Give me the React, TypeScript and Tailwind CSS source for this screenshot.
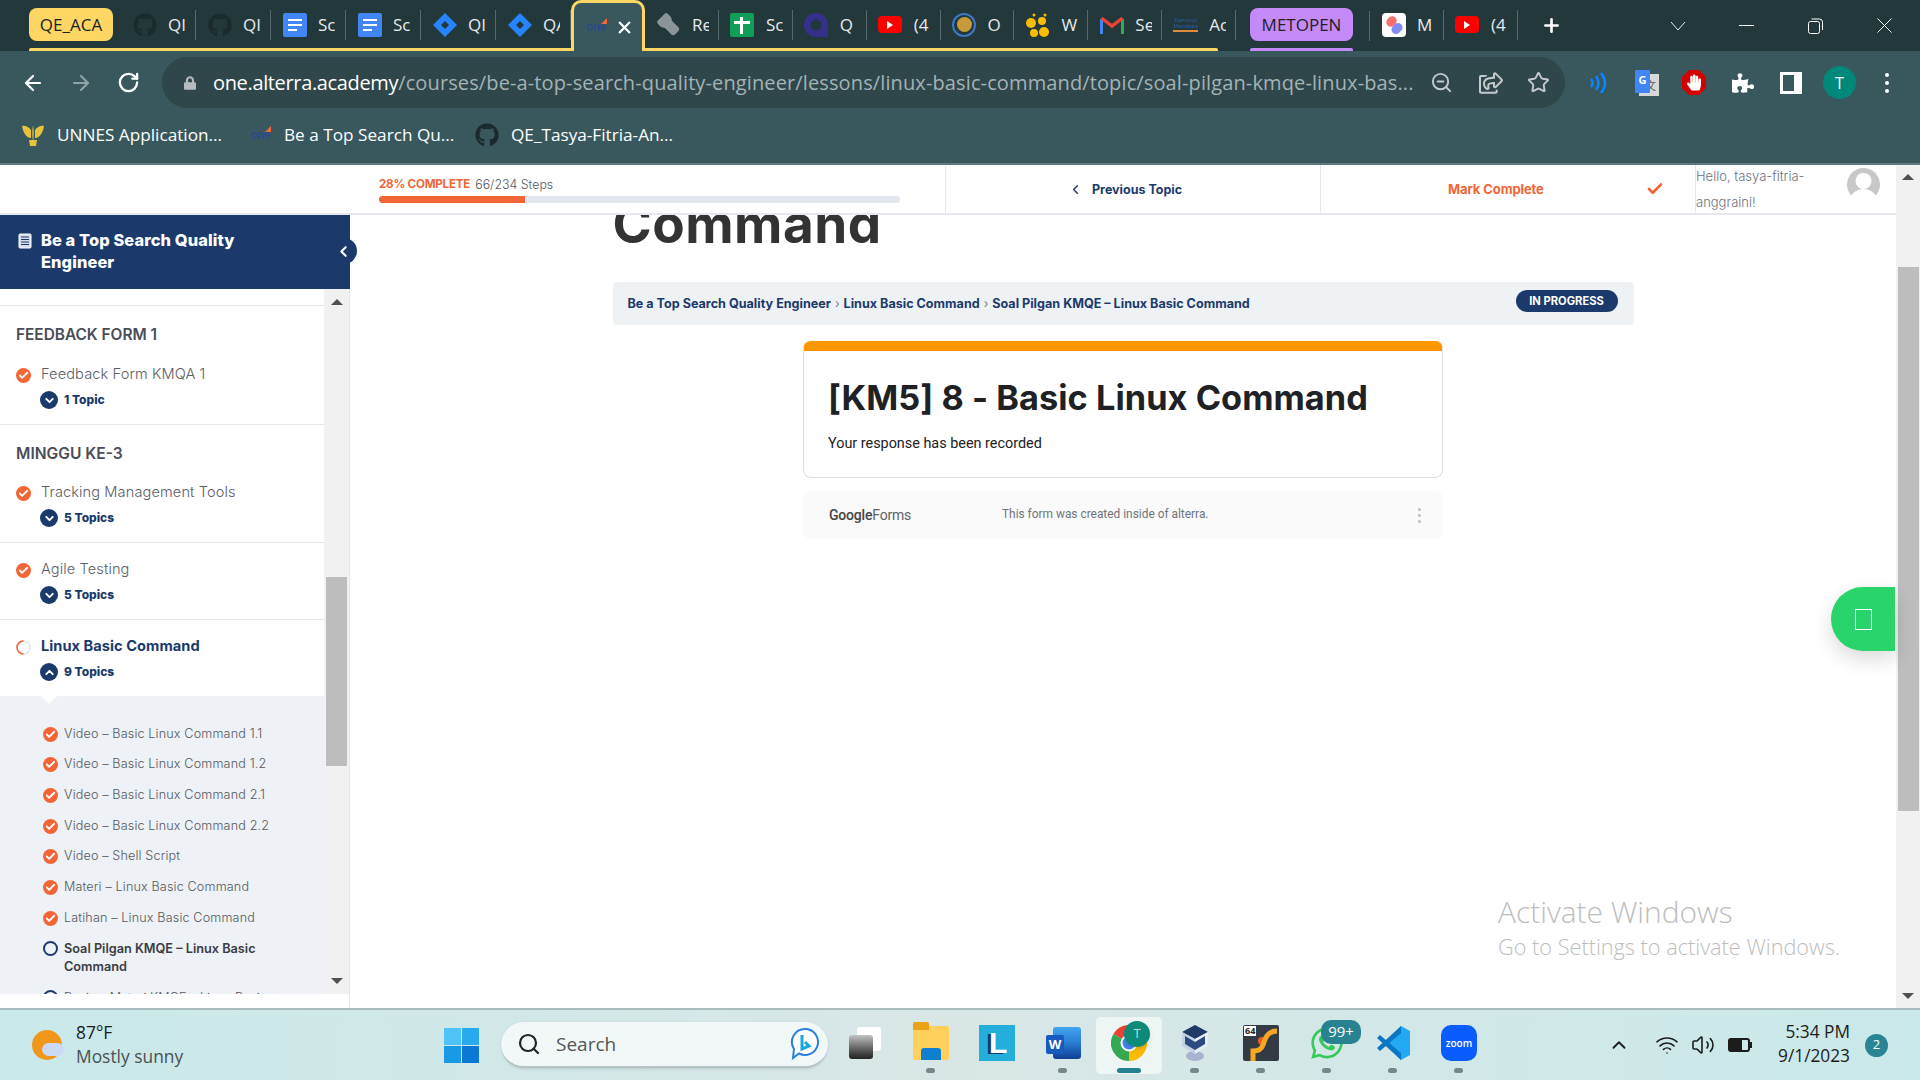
import {
  ArrowLeft,
  ArrowRight,
  Check,
  ChevronDown,
  ChevronLeft,
  ChevronUp,
  Flashlight,
  Plus,
  RotateCw,
  Search,
  Star,
  Volume2,
  Wifi,
  ZoomOut,
} from 'lucide-react';
import { FaGithub, FaHandPaper, FaLock, FaPuzzlePiece, FaRegShareSquare, FaWhatsapp } from 'react-icons/fa';

const ui = "font-['Open_Sans',sans-serif]";
const navy = 'text-[#1b3a6b]';

const GitHubIcon = () => <FaGithub className="h-[24px] w-[24px] text-[#1b2a2d]" />;

const DocsIcon = () => (
  <div className="flex h-[24px] w-[24px] flex-col justify-center gap-[3px] rounded-[2px] bg-[#4285f4] px-[5px]">
    <div className="h-[2px] bg-white" />
    <div className="h-[2px] bg-white" />
    <div className="h-[2px] w-[9px] bg-white" />
  </div>
);

const JiraIcon = () => (
  <svg width="24" height="24" viewBox="0 0 24 24">
    <path d="M12 0 24 12 12 24 0 12Z" fill="#2684ff" />
    <path d="M12 8 16 12 12 16 8 12Z" fill="#22383b" />
  </svg>
);

const SheetsIcon = () => (
  <div className="relative h-[24px] w-[24px] rounded-[2px] bg-[#0f9d58]">
    <div className="absolute left-[10px] top-[4px] h-[17px] w-[3px] bg-white" />
    <div className="absolute left-[4px] top-[8px] h-[3px] w-[16px] bg-white" />
  </div>
);

const YoutubeIcon = () => (
  <div className="flex h-[17px] w-[24px] items-center justify-center rounded-[4px] bg-[#ff0000]">
    <div className="h-0 w-0 border-y-[4px] border-l-[6px] border-y-transparent border-l-white" />
  </div>
);

const QuipIcon = () => (
  <svg width="24" height="24" viewBox="0 0 24 24">
    <path d="M12 0a12 12 0 1 0 0 24h12V12A12 12 0 0 0 12 0Z" fill="#35308c" />
    <circle cx="12" cy="12" r="5.5" fill="#22383b" />
  </svg>
);

const RingIcon = () => (
  <div className="flex h-[24px] w-[24px] items-center justify-center rounded-full border-2 border-[#3f78c4]">
    <div className="h-[15px] w-[15px] rounded-full bg-[#c99a3b]" />
  </div>
);

const DotsIcon = () => (
  <svg width="25" height="24" viewBox="0 0 25 24" fill="#fbbc04">
    <circle cx="6" cy="10" r="5" />
    <circle cx="17" cy="8" r="4" />
    <circle cx="9" cy="20" r="4" />
    <circle cx="19" cy="19" r="5" />
    <circle cx="20" cy="2" r="1.5" />
    <circle cx="9" cy="2" r="1.5" />
  </svg>
);

const GmailIcon = () => (
  <svg width="24" height="20" viewBox="0 0 24 20" fill="none">
    <path d="M1.5 19V4" stroke="#4285f4" strokeWidth="3" />
    <path d="M22.5 19V4" stroke="#34a853" strokeWidth="3" />
    <path d="M1.5 3 12 11 22.5 3" stroke="#ea4335" strokeWidth="3.4" />
  </svg>
);

const KampusIcon = () => (
  <div className="flex w-[25px] flex-col items-center text-[6px] leading-[6px] text-[#2a5db0]">
    <span>Kampus</span>
    <span>Merdeka</span>
    <div className="mt-[1px] h-[2px] w-full bg-[#e08a3c]" />
  </div>
);

const MIcon = () => (
  <div className="relative h-[24px] w-[24px] overflow-hidden rounded-[4px] bg-white">
    <div className="absolute left-[4px] top-[4px] h-[9px] w-[11px] -rotate-45 rounded-full bg-[#f87171]" />
    <div className="absolute left-[9px] top-[11px] h-[9px] w-[12px] -rotate-45 rounded-full bg-[#818cf8]" />
  </div>
);

const OneLogo = () => (
  <div className="relative h-[16px] w-[22px] text-center font-['Liberation_Sans',sans-serif] text-[12px] font-bold leading-[16px] tracking-[-0.5px] text-[#2b4a86]">
    one
    <div className="absolute right-0 top-[-1px] h-0 w-0 border-b-[6px] border-l-[6px] border-b-[#ef6a32] border-l-transparent" />
  </div>
);

const firstTabs = [
  { icon: <GitHubIcon />, label: 'QI' },
  { icon: <GitHubIcon />, label: 'QI' },
  { icon: <DocsIcon />, label: 'Sc' },
  { icon: <DocsIcon />, label: 'Sc' },
  { icon: <JiraIcon />, label: 'QI' },
  { icon: <JiraIcon />, label: 'QA' },
];

const secondTabs = [
  { icon: <Flashlight className="h-[24px] w-[24px] -rotate-45 fill-[#8b9599] text-[#8b9599]" />, label: 'Re' },
  { icon: <SheetsIcon />, label: 'Sc' },
  { icon: <QuipIcon />, label: 'Q' },
  { icon: <YoutubeIcon />, label: '(4' },
  { icon: <RingIcon />, label: 'O' },
  { icon: <DotsIcon />, label: 'W' },
  { icon: <GmailIcon />, label: 'Se' },
  { icon: <KampusIcon />, label: 'Ac' },
];

const thirdTabs = [
  { icon: <MIcon />, label: 'M' },
  { icon: <YoutubeIcon />, label: '(4' },
];

function Tab({ icon, label, wide }: { icon: React.ReactNode; label: string; wide?: boolean }) {
  return (
    <div className={`flex h-full shrink-0 items-center pb-[2px] ${wide ? 'w-[75px]' : 'w-[73.9px]'}`}>
      <div className="flex w-[47px] justify-center">{icon}</div>
      <div className="w-[17px] overflow-hidden whitespace-nowrap text-[17px] text-[#e8eaed]">{label}</div>
      <div className="ml-auto h-[30px] w-[1px] bg-[#56696c]" />
    </div>
  );
}

function TabStrip() {
  return (
    <div className={`flex h-[51px] shrink-0 items-center bg-[#22383b] pl-[29px] ${ui}`}>
      <div className="relative flex h-full w-[1207px] shrink-0 items-center">
        <div className="mb-[2px] flex h-[33px] w-[84px] shrink-0 items-center justify-center rounded-[8px] bg-[#fdd663] text-[17px] text-[#202124]">
          QE_ACA
        </div>
        <div className="w-[8px] shrink-0" />
        {firstTabs.map((t, i) => (
          <Tab key={i} icon={t.icon} label={t.label} wide />
        ))}
        <div className="relative z-10 flex h-full w-[74px] shrink-0 items-center rounded-t-[10px] border-x-[3px] border-t-[3px] border-[#fdd663] bg-[#38585d] pl-[11px]">
          <OneLogo />
          <svg className="ml-[11px]" width="13" height="13" viewBox="0 0 12 12" stroke="#fff" strokeWidth="2">
            <path d="M1 1 11 11M11 1 1 11" />
          </svg>
        </div>
        {secondTabs.map((t, i) => (
          <Tab key={i} icon={t.icon} label={t.label} />
        ))}
        <div className="absolute bottom-0 left-0 h-[3px] w-[1189px] rounded-t-[2px] bg-[#fdd663]" />
      </div>
      <div className="relative ml-[14px] flex h-full w-[103px] shrink-0 items-center">
        <div className="mb-[2px] flex h-[33px] w-[103px] items-center justify-center rounded-[8px] bg-[#c58af9] text-[17px] text-[#202124]">
          METOPEN
        </div>
        <div className="absolute bottom-0 left-0 h-[3px] w-full rounded-t-[2px] bg-[#c58af9]" />
      </div>
      <div className="ml-[16px] h-[30px] w-[1px] bg-[#56696c]" />
      {thirdTabs.map((t, i) => (
        <Tab key={i} icon={t.icon} label={t.label} />
      ))}
      <Plus className="ml-[23px] h-[21px] w-[21px] text-white" strokeWidth={3} />
      <svg className="ml-[108px]" width="16" height="10" viewBox="0 0 16 10" fill="none" stroke="#e8eaed">
        <path d="M1 1 8 9 15 1" />
      </svg>
      <div className="ml-[53px] h-[1px] w-[15px] bg-white" />
      <svg className="ml-[54px]" width="15" height="16" viewBox="0 0 15 16" fill="none" stroke="#fff">
        <rect x="0.5" y="3.5" width="11" height="12" rx="2" />
        <path d="M3.5 1h8a3 3 0 0 1 3 3v8" />
      </svg>
      <svg className="ml-[54px]" width="15" height="15" viewBox="0 0 15 15" stroke="#fff">
        <path d="M.5.5 14.5 14.5M14.5.5.5 14.5" />
      </svg>
    </div>
  );
}

function Toolbar() {
  return (
    <div className={`flex h-[57px] shrink-0 items-start bg-[#38585d] pt-[6px] ${ui}`}>
      <div className="flex h-[51px] w-[162px] shrink-0 items-center pl-[21px]">
        <ArrowLeft className="h-[24px] w-[24px] text-white" strokeWidth={2.2} />
        <ArrowRight className="ml-[24px] h-[24px] w-[24px] text-[#8fa3a6]" strokeWidth={2.2} />
        <RotateCw className="ml-[24px] h-[23px] w-[23px] text-white" strokeWidth={2.4} />
      </div>
      <div className="flex h-[51px] w-[1403px] shrink-0 items-center rounded-full bg-[#2f464a] pl-[22px]">
        <FaLock className="h-[14px] w-[12px] text-[#b5bcbf]" />
        <div className="ml-[17px] w-[1205px] overflow-hidden whitespace-nowrap text-[20px] tracking-[0.12px] text-[#a3b3b6]">
          <span className="tracking-[-0.35px] text-white">one.alterra.academy</span>
          /courses/be-a-top-search-quality-engineer/lessons/linux-basic-command/topic/soal-pilgan-kmqe-linux-bas...
        </div>
        <ZoomOut className="ml-[12px] h-[23px] w-[23px] text-[#c3cacc]" />
        <FaRegShareSquare className="ml-[26px] h-[22px] w-[24px] text-[#c3cacc]" />
        <Star className="ml-[24px] h-[23px] w-[23px] text-[#c3cacc]" strokeWidth={2} />
      </div>
      <div className="flex h-[51px] flex-1 items-center pl-[24px]">
        <svg width="20" height="24" viewBox="0 0 20 24" fill="none" stroke="#0a84ff" strokeWidth="2.6">
          <path d="M2 8q3 4 0 8M7 5q5 7 0 14M12 2q8 10 0 20" />
        </svg>
        <div className="relative ml-[26px] h-[26px] w-[24px]">
          <div className="absolute left-[4px] top-[4px] h-[22px] w-[20px] bg-[#d8d8d8] pl-[6px] pt-[5px] font-['Noto_Sans_CJK_SC',sans-serif] text-[11px] leading-[12px] text-[#555]">文</div>
          <div className="absolute left-0 top-0 h-[23px] w-[15px] rounded-[1px] bg-[#4285f4] text-center text-[11px] font-bold leading-[20px] text-white">G</div>
        </div>
        <svg className="ml-[23px]" width="24" height="25" viewBox="0 0 24 25">
          <path d="M7 0h10l7 7v11l-7 7H7l-7-7V7Z" fill="#d40000" />
          <foreignObject x="5" y="3" width="14" height="19">
            <FaHandPaper className="h-[19px] w-[14px] text-white" />
          </foreignObject>
        </svg>
        <FaPuzzlePiece className="ml-[26px] h-[22px] w-[22px] text-white" />
        <div className="ml-[26px] flex h-[22px] w-[22px] border-[3px] border-white bg-white">
          <div className="h-full w-[11px] bg-[#38585d]" />
        </div>
        <div className="ml-[21px] flex h-[33px] w-[33px] items-center justify-center rounded-full bg-[#00897b] text-[16px] text-white">T</div>
        <div className="ml-[29px] flex flex-col gap-[4px]">
          <div className="h-[4px] w-[4px] rounded-full bg-white" />
          <div className="h-[4px] w-[4px] rounded-full bg-white" />
          <div className="h-[4px] w-[4px] rounded-full bg-white" />
        </div>
      </div>
    </div>
  );
}

function BookmarkBar() {
  return (
    <div className={`flex h-[55px] shrink-0 items-center bg-[#38585d] pb-[2px] text-[17.2px] text-white ${ui}`}>
      <svg className="ml-[21px]" width="24" height="24" viewBox="0 0 24 24" fill="#e5c33d">
        <path d="M12 2c-1 6-1 11 0 16 1-5 1-10 0-16ZM10 7C8 4 4 2 1 3c1 6 4 12 9 12ZM14 7c2-3 6-5 9-4-1 6-4 12-9 12Z" />
        <path d="M8 17h8l-1 6H9Z" />
      </svg>
      <span className="ml-[12px] w-[166px] whitespace-nowrap">UNNES Application...</span>
      <div className="ml-[26px]"><OneLogo /></div>
      <span className="ml-[13px] w-[166px] whitespace-nowrap">Be a Top Search Qu...</span>
      <FaGithub className="ml-[25px] h-[24px] w-[24px] text-[#1b2a2d]" />
      <span className="ml-[12px] whitespace-nowrap">QE_Tasya-Fitria-An...</span>
    </div>
  );
}

function Done({ size = 'h-[15px] w-[15px]' }: { size?: string }) {
  return (
    <div className={`flex shrink-0 items-center justify-center rounded-full bg-[#f26536] ${size}`}>
      <Check className="h-[11px] w-[11px] text-white" strokeWidth={4} />
    </div>
  );
}

function Lesson({ title, topics, open, active }: { title: string; topics: string; open?: boolean; active?: boolean }) {
  return (
    <div className="h-[76px] pl-[16px] pt-[17px]">
      <div className="flex h-[20px] items-center">
        {active ? (
          <svg className="shrink-0" width="15" height="15" viewBox="0 0 15 15" fill="none" strokeWidth="1.6">
            <circle cx="7.5" cy="7.5" r="6.5" stroke="#e2e8f0" />
            <path d="M7.5 1A6.5 6.5 0 0 0 7.5 14" stroke="#f26536" />
          </svg>
        ) : (
          <Done />
        )}
        <span className={`ml-[10px] text-[14.6px] ${active ? `font-bold tracking-[0.05px] ${navy}` : 'font-light tracking-[0.1px] text-[#5c6066]'}`}>{title}</span>
      </div>
      <div className="ml-[24px] mt-[5px] flex h-[20px] items-center">
        <div className="flex h-[18px] w-[18px] items-center justify-center rounded-full bg-[#1b3a6b]">
          {open ? (
            <ChevronUp className="h-[13px] w-[13px] text-white" strokeWidth={3.5} />
          ) : (
            <ChevronDown className="h-[13px] w-[13px] text-white" strokeWidth={3.5} />
          )}
        </div>
        <span className={`ml-[6px] text-[12px] font-extrabold ${navy}`}>{topics}</span>
      </div>
    </div>
  );
}

const topics = [
  'Video – Basic Linux Command 1.1',
  'Video – Basic Linux Command 1.2',
  'Video – Basic Linux Command 2.1',
  'Video – Basic Linux Command 2.2',
  'Video – Shell Script',
  'Materi – Linux Basic Command',
  'Latihan – Linux Basic Command',
];

function ScrollArrow({ up, className = '' }: { up?: boolean; className?: string }) {
  return (
    <div className={`flex shrink-0 items-center justify-center ${className}`}>
      <div className={`h-0 w-0 border-x-[6px] border-x-transparent ${up ? 'border-b-[6px] border-b-[#505050]' : 'border-t-[6px] border-t-[#505050]'}`} />
    </div>
  );
}

function Sidebar() {
  return (
    <aside className="flex w-[350px] shrink-0 flex-col border-r border-[#e5e7eb] font-['Inter',sans-serif]">
      <div className="relative flex h-[74px] w-[350px] shrink-0 items-start bg-[#1b3a6b] pl-[18px] pt-[14px]">
        <svg className="mt-[4px] shrink-0" width="14" height="16" viewBox="0 0 14 16" fill="none">
          <rect x="1" y="1" width="12" height="14" rx="1" fill="#d7deea" stroke="#fff" />
          <path d="M3 4h8M3 6.5h8M3 9h8M3 11.5h8" stroke="#1b3a6b" />
        </svg>
        <div className="ml-[9px] w-[240px] text-[16.4px] font-extrabold leading-[22px] tracking-[0.1px] text-white">
          Be a Top Search Quality Engineer
        </div>
        <div className="absolute left-[330px] top-[23px] flex h-[26px] w-[27px] items-center justify-center rounded-r-full bg-[#1b3a6b]">
          <ChevronLeft className="h-[17px] w-[17px] text-white" strokeWidth={3} />
        </div>
      </div>
      <div className="flex h-[705px] shrink-0">
        <div className="w-[324px] shrink-0 overflow-hidden">
          <div className="h-[17px] border-b border-[#e5e7eb]" />
          <div className="border-b border-[#e5e7eb]">
            <div className="h-[42px] pl-[16px] pt-[19px] text-[15.4px] font-semibold leading-[20px] text-[#4a4d55]">FEEDBACK FORM 1</div>
            <Lesson title="Feedback Form KMQA 1" topics="1 Topic" />
          </div>
          <div className="border-b border-[#e5e7eb]">
            <div className="h-[41px] pl-[16px] pt-[19px] text-[15.6px] font-semibold leading-[20px] text-[#4a4d55]">MINGGU KE-3</div>
            <Lesson title="Tracking Management Tools" topics="5 Topics" />
          </div>
          <div className="border-b border-[#e5e7eb]">
            <Lesson title="Agile Testing" topics="5 Topics" />
          </div>
          <Lesson title="Linux Basic Command" topics="9 Topics" open active />
          <div className="relative bg-[#eef1f5] pl-[43px] pt-[23px]">
            <div className="absolute left-[41px] top-0 h-0 w-0 border-x-[8px] border-t-[8px] border-x-transparent border-t-white" />
            {topics.map((t) => (
              <div key={t} className="mb-[0.7px] flex h-[30px] items-center">
                <Done />
                <span className="ml-[6px] text-[12.6px] font-light tracking-[0.15px] text-[#55585e]">{t}</span>
              </div>
            ))}
            <div className="mb-[0.7px] flex items-start py-[6px]">
              <div className="mt-[1px] h-[15px] w-[15px] shrink-0 rounded-full border-2 border-[#1b3a6b]" />
              <span className="ml-[6px] w-[210px] text-[12.7px] font-semibold leading-[18px] text-[#3a3d44]">Soal Pilgan KMQE – Linux Basic Command</span>
            </div>
            <div className="flex items-start py-[6px]">
              <div className="mt-[1px] h-[15px] w-[15px] shrink-0 rounded-full border-2 border-[#1b3a6b]" />
              <span className="ml-[6px] text-[12.6px] font-light text-[#55585e]">Review Materi KMQE – Linux Basic</span>
            </div>
          </div>
        </div>
        <div className="flex w-[25px] shrink-0 flex-col bg-[#f1f1f1]">
          <ScrollArrow up className="h-[26px]" />
          <div className="h-[262px] shrink-0" />
          <div className="ml-[2px] h-[189px] w-[21px] shrink-0 bg-[#bdbdbd]" />
          <div className="flex-1" />
          <ScrollArrow className="h-[26px]" />
        </div>
      </div>
    </aside>
  );
}

function PageHeader() {
  return (
    <div className="flex h-[50px] shrink-0 border-b-2 border-[#e5e9ef] bg-white font-['Inter',sans-serif]">
      <div className="w-[946px] shrink-0 border-r border-[#e5e9ef] pl-[379px] pr-[45px] pt-[12px]">
        <div className="flex h-[16px] items-center whitespace-nowrap text-[11.6px]">
          <span className="font-bold tracking-[-0.2px] text-[#f26536]">28% COMPLETE</span>
          <span className="ml-[5px] text-[12.4px] font-light text-[#55585e]">66/234 Steps</span>
        </div>
        <div className="mt-[3px] h-[7px] w-[521px] overflow-hidden rounded-full bg-[#e2e6ee]">
          <div className="h-full w-[146px] bg-[#f26536]" />
        </div>
      </div>
      <div className="flex w-[375px] shrink-0 items-center border-r border-[#e5e9ef] pl-[122px]">
        <ChevronLeft className={`h-[15px] w-[15px] ${navy}`} strokeWidth={2.4} />
        <span className={`ml-[9px] mt-[2px] text-[12.5px] font-bold ${navy}`}>Previous Topic</span>
      </div>
      <div className="flex w-[375px] shrink-0 items-center border-r border-[#e5e9ef] pl-[127px]">
        <span className="mt-[2px] w-[198px] text-[13px] font-bold tracking-[-0.1px] text-[#f26536]">Mark Complete</span>
        <Check className="h-[18px] w-[18px] text-[#f26536]" strokeWidth={3.5} />
      </div>
      <div className="flex flex-1 items-start">
        <div className="-mt-[2px] w-[130px] text-[13px] font-light leading-[26px] text-[#6b7280]">Hello, tasya-fitria-anggraini!</div>
        <svg className="ml-[21px] mt-[3px] shrink-0" width="33" height="33" viewBox="0 0 33 33">
          <circle cx="16.5" cy="16.5" r="16.5" fill="#c8c8c8" />
          <circle cx="16.5" cy="13" r="8" fill="#fff" />
          <ellipse cx="16.5" cy="34" rx="14" ry="13" fill="#fff" />
        </svg>
      </div>
    </div>
  );
}

function MainContent() {
  return (
    <main className="flex-1 overflow-hidden bg-white font-['Inter',sans-serif]">
      <div className="mx-auto w-[1021px]">
        <div className="h-[67px] overflow-hidden">
          <div className="-mt-[21px] text-[53px] font-bold leading-[60px] tracking-[0.5px] text-[#333333]">Command</div>
        </div>
        <div className="flex h-[43px] items-center justify-between rounded-[4px] bg-[#eff2f5] pl-[15px] pr-[16px]">
          <div className="mt-[1px] flex items-center whitespace-nowrap text-[12.6px] font-bold">
            <span className={navy}>Be a Top Search Quality Engineer</span>
            <span className="mx-[4px] font-light text-[#5c6066]">›</span>
            <span className={navy}>Linux Basic Command</span>
            <span className="mx-[4px] font-light text-[#5c6066]">›</span>
            <span className={navy}>Soal Pilgan KMQE – Linux Basic Command</span>
          </div>
          <div className="-mt-[6px] flex h-[22px] w-[102px] items-center justify-center rounded-full bg-[#1b3a6b] pt-[1px] text-[11.2px] font-bold text-white">
            IN PROGRESS
          </div>
        </div>
        <div className="mx-auto mt-[16px] w-[640px]">
          <div className="h-[137px] overflow-hidden rounded-[8px] border border-t-[10px] border-[#dadce0] border-t-[#ff9800] bg-white pl-[24px] pt-[24px]">
            <div className="text-[34.3px] font-bold leading-[46px] tracking-[0.05px] text-[#202124]">[KM5] 8 - Basic Linux Command</div>
            <div className="mt-[13px] font-['Roboto',sans-serif] text-[14.4px] leading-[20px] text-[#202124]">Your response has been recorded</div>
          </div>
          <div className="mt-[13px] flex h-[48px] items-center rounded-[8px] bg-[#fafafa] pl-[26px] pr-[22px] font-['Roboto',sans-serif]">
            <div className="w-[173px] text-[14px] tracking-[-0.2px] text-[#5f6368]">
              <span className="font-medium text-[#444]">Google</span>Forms
            </div>
            <div className="text-[11.9px] text-[#70757a]">This form was created inside of alterra.</div>
            <div className="ml-auto flex flex-col gap-[3px]">
              <div className="h-[3px] w-[3px] rounded-full bg-[#bdbdbd]" />
              <div className="h-[3px] w-[3px] rounded-full bg-[#bdbdbd]" />
              <div className="h-[3px] w-[3px] rounded-full bg-[#bdbdbd]" />
            </div>
          </div>
        </div>
      </div>
    </main>
  );
}

function PageScrollbar() {
  return (
    <div className="flex w-[24px] shrink-0 flex-col bg-[#f1f1f1]">
      <ScrollArrow up className="h-[24px]" />
      <div className="h-[78px] shrink-0" />
      <div className="ml-[2px] h-[544px] w-[21px] shrink-0 bg-[#bdbdbd]" />
      <div className="flex-1" />
      <ScrollArrow className="h-[24px]" />
    </div>
  );
}

function TaskIcon({ children, dot, active }: { children: React.ReactNode; dot?: boolean; active?: boolean }) {
  return (
    <div className={`relative flex h-[57px] w-[66px] shrink-0 items-center justify-center pb-[4px] ${active ? 'rounded-[5px] bg-[#eef5f5]' : ''}`}>
      {children}
      {dot && <div className="absolute bottom-[1px] left-[28px] h-[5px] w-[9px] rounded-full bg-[#75878a]" />}
      {active && <div className="absolute bottom-[1px] left-[21px] h-[5px] w-[24px] rounded-full bg-[#25808f]" />}
    </div>
  );
}

function Taskbar() {
  return (
    <div className="flex h-[72px] shrink-0 items-center border-t-2 border-[#a9bcbd] bg-gradient-to-r from-[#c9e9ea] via-[#d9e6e6] to-[#cae9ea] font-['Open_Sans',sans-serif]">
      <div className="relative ml-[32px] h-[30px] w-[30px] shrink-0 rounded-full bg-[#f0971c]">
        <div className="absolute left-[10px] top-[13px] h-[13px] w-[22px] rounded-full bg-[#ccd9f5]" />
      </div>
      <div className="-mt-[2px] ml-[14px] w-[120px] shrink-0 text-[17.4px] leading-[24px]">
        <div className="text-[#1c1c1c]">87°F</div>
        <div className="text-[#4a5152]">Mostly sunny</div>
      </div>
      <div className="ml-[248px] grid h-[35px] w-[35px] shrink-0 grid-cols-2 gap-[1px]">
        <div className="bg-[#4fc3f7]" />
        <div className="bg-[#29a9ee]" />
        <div className="bg-[#1a9ae6]" />
        <div className="bg-[#0a78d4]" />
      </div>
      <div className="ml-[22px] flex h-[46px] w-[327px] shrink-0 items-center rounded-full border-b-2 border-[#b5c4c5] bg-[#f2f8f8] pl-[16px] shadow-sm">
        <Search className="h-[24px] w-[24px] text-[#222]" strokeWidth={2.2} />
        <span className="ml-[15px] text-[19px] text-[#555]">Search</span>
        <svg className="ml-auto mr-[8px]" width="30" height="34" viewBox="0 0 30 34" fill="none">
          <path d="M15 2a13 13 0 1 1-6 24.5L3 31l1-9A13 13 0 0 1 15 2Z" stroke="#2a7fe0" strokeWidth="2" fill="#fff" />
          <path d="M12 8v14l7-3-4-4" stroke="#1aa6e0" strokeWidth="3" />
        </svg>
      </div>
      <div className="ml-[4px] flex items-end">
        <TaskIcon>
          <div className="relative h-[32px] w-[32px]">
            <div className="absolute right-0 top-0 h-[24px] w-[24px] rounded-[3px] bg-white" />
            <div className="absolute bottom-0 left-0 h-[24px] w-[24px] rounded-[3px] bg-gradient-to-b from-[#c4c4c4] to-[#222]" />
          </div>
        </TaskIcon>
        <TaskIcon dot>
          <div className="relative h-[34px] w-[36px] rounded-[2px] bg-[#ffd15c]">
            <div className="absolute -top-[4px] left-0 h-[8px] w-[16px] rounded-t-[2px] bg-[#e8a317]" />
            <div className="absolute bottom-0 left-[8px] h-[12px] w-[20px] rounded-t-[3px] bg-[#0f7fcf]" />
          </div>
        </TaskIcon>
        <TaskIcon>
          <div className="relative h-[36px] w-[36px] bg-[#24aedb] pl-[10px] font-['Liberation_Sans',sans-serif] text-[30px] font-bold leading-[36px] text-white [text-shadow:-3px_1px_0_#123a6b]">L</div>
        </TaskIcon>
        <TaskIcon dot>
          <div className="relative ml-[8px] h-[32px] w-[28px] rounded-[3px] bg-gradient-to-b from-[#41a5ee] via-[#2b7cd3] to-[#103f91]">
            <div className="absolute -left-[7px] top-[8px] flex h-[19px] w-[18px] items-center justify-center rounded-[2px] bg-[#185abd] text-[13px] font-bold text-white">W</div>
          </div>
        </TaskIcon>
        <TaskIcon active>
          <svg width="36" height="36" viewBox="0 0 36 36">
            <path d="M18 18 2.4 9A18 18 0 0 1 33.6 9Z" fill="#ea4335" />
            <path d="M18 18 2.4 9A18 18 0 0 0 18 36Z" fill="#34a853" />
            <path d="M18 18 33.6 9A18 18 0 0 1 18 36Z" fill="#fbbc04" />
            <circle cx="18" cy="18" r="8.5" fill="#fff" />
            <circle cx="18" cy="18" r="6.5" fill="#4285f4" />
          </svg>
          <div className="absolute left-[28px] top-[4px] flex h-[26px] w-[26px] items-center justify-center rounded-full bg-[#0d8a78] text-[13px] text-[#b7ded8] shadow-md">T</div>
        </TaskIcon>
        <TaskIcon dot>
          <svg width="30" height="38" viewBox="0 0 30 38">
            <ellipse cx="15" cy="32" rx="9" ry="5" fill="#a7b3cf" />
            <path d="M15 1 28 8 15 15 2 8Z" fill="#1f3a66" />
            <path d="M15 15 28 8v14L15 30Z" fill="#e7edf5" />
            <path d="M15 15 2 8v14L15 30Z" fill="#c4d0e3" />
            <path d="M15 18 25 12v8l-10 6ZM15 18 5 12v8l10 6Z" fill="#2c4a80" />
          </svg>
        </TaskIcon>
        <TaskIcon dot>
          <div className="relative h-[36px] w-[36px] rounded-[2px] bg-[#343a44]">
            <div className="absolute left-[1px] top-[1px] bg-white px-[1px] text-[9px] font-bold leading-[10px] text-[#222]">64</div>
            <div className="absolute left-[15px] top-[12px] h-[8px] w-[8px] rounded-full bg-[#e8601c]" />
            <svg className="absolute left-0 top-0" width="36" height="36" viewBox="0 0 36 36" fill="none" stroke="#f5a623" strokeWidth="5">
              <path d="M34 6C24 6 22 14 20 20s-8 6-10 6v10" />
            </svg>
          </div>
        </TaskIcon>
        <TaskIcon dot>
          <FaWhatsapp className="h-[36px] w-[36px] text-[#37c75a]" />
          <div className="absolute left-[27px] top-[3px] flex h-[24px] w-[40px] items-center justify-center rounded-[10px] bg-[#28828f] text-[15px] text-white">99+</div>
        </TaskIcon>
        <TaskIcon dot>
          <svg width="36" height="36" viewBox="0 0 36 36" fill="none">
            <path d="M26 1 35 6v24l-9 5L10 19Z" fill="#23a9f2" />
            <path d="M26 1v34L2 13l3-3 21 18V8L5 26l-3-3Z" fill="#0b76c4" />
          </svg>
        </TaskIcon>
        <TaskIcon dot>
          <div className="flex h-[36px] w-[36px] items-center justify-center rounded-[10px] bg-[#0b5cff] text-[10px] font-semibold text-white">zoom</div>
        </TaskIcon>
      </div>
      <ChevronUp className="ml-[116px] h-[22px] w-[22px] text-[#1c1c1c]" strokeWidth={2} />
      <Wifi className="ml-[25px] h-[24px] w-[24px] text-[#1c1c1c]" strokeWidth={1.6} />
      <Volume2 className="ml-[12px] h-[24px] w-[24px] text-[#1c1c1c]" strokeWidth={1.6} />
      <div className="relative ml-[13px] h-[14px] w-[22px] rounded-[3px] border-2 border-[#1c1c1c]">
        <div className="h-full w-[12px] bg-[#1c1c1c]" />
        <div className="absolute -right-[4px] top-[2px] h-[6px] w-[2px] bg-[#1c1c1c]" />
      </div>
      <div className="-mt-[2px] ml-[6px] w-[94px] text-right text-[17.3px] leading-[24px] text-[#1c1c1c]">
        <div>5:34 PM</div>
        <div>9/1/2023</div>
      </div>
      <div className="ml-[15px] flex h-[23px] w-[23px] items-center justify-center rounded-full bg-[#2b8494] text-[13px] text-white">2</div>
    </div>
  );
}

export default function App() {
  return (
    <div className="relative flex h-[1080px] w-[1920px] flex-col overflow-hidden bg-white">
      <TabStrip />
      <Toolbar />
      <BookmarkBar />
      <div className="h-[2px] shrink-0 bg-[#5d7b7f]" />
      <div className="flex h-[843px] shrink-0">
        <div className="flex w-[1896px] shrink-0 flex-col">
          <PageHeader />
          <div className="flex min-h-0 flex-1">
            <Sidebar />
            <MainContent />
          </div>
        </div>
        <PageScrollbar />
      </div>
      <Taskbar />

      {/* chat button and the windows watermark sit over the page */}
      <div className="absolute left-[1831px] top-[587px] flex h-[64px] w-[64px] items-center justify-center rounded-l-[32px] bg-[#29d46a] shadow-[0_8px_20px_rgba(0,0,0,0.15)]">
        <div className="h-[21px] w-[17px] border border-white" />
      </div>
      <div className="pointer-events-none absolute left-[1498px] top-[892px] font-['Open_Sans',sans-serif] font-light text-[#bdbdbd]">
        <div className="text-[29.9px] leading-[40px]">Activate Windows</div>
        <div className="text-[21.7px] leading-[30px]">Go to Settings to activate Windows.</div>
      </div>
    </div>
  );
}
